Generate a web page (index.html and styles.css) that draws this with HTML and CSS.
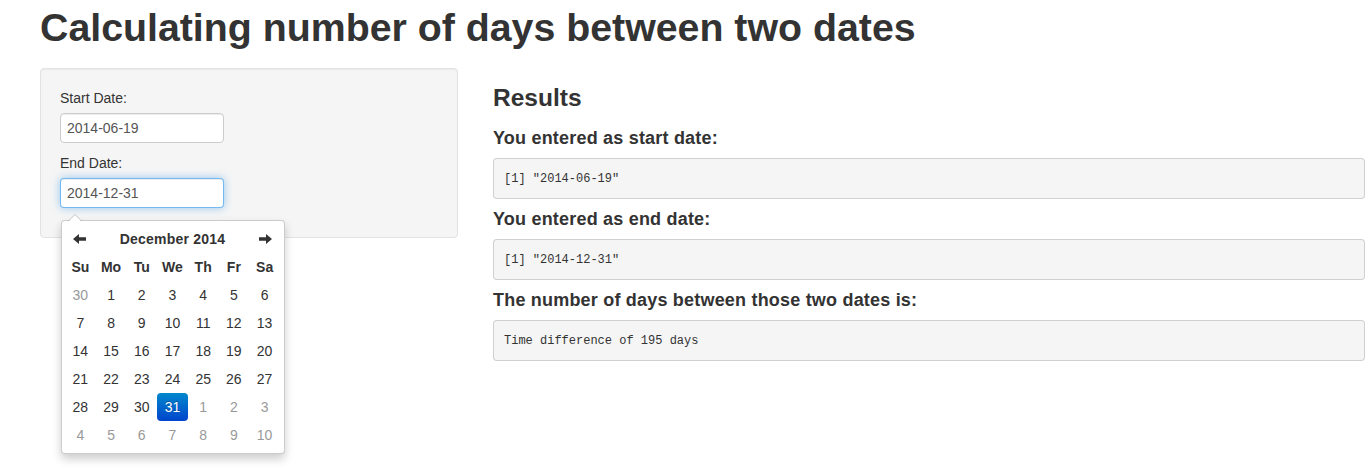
FILE: index.html
```html
<!DOCTYPE html>
<html>
<head>
<meta charset="utf-8">
<link rel="stylesheet" href="styles.css">
</head>
<body>
<div class="page">
  <h1 class="title">Calculating number of days between two dates</h1>
  <div class="layout">
    <div class="well">
      <label class="lbl">Start Date:</label>
      <input class="inp" type="text" value="2014-06-19">
      <label class="lbl">End Date:</label>
      <div class="picker-wrap">
        <input class="inp focus" type="text" value="2014-12-31">
        <div class="datepicker">
          <table class="cal">
            <thead>
              <tr class="head">
                <th class="nav"><svg width="14" height="10" viewBox="0 0 14 10"><path d="M0 5 L6 0 L6 3.3 L13 3.3 L13 6.7 L6 6.7 L6 10 Z" fill="#333"/></svg></th>
                <th colspan="5" class="month">December 2014</th>
                <th class="nav"><svg width="14" height="10" viewBox="0 0 14 10"><path d="M14 5 L8 0 L8 3.3 L1 3.3 L1 6.7 L8 6.7 L8 10 Z" fill="#333"/></svg></th>
              </tr>
              <tr class="dow">
                <th>Su</th><th>Mo</th><th>Tu</th><th>We</th><th>Th</th><th>Fr</th><th>Sa</th>
              </tr>
            </thead>
            <tbody>
              <tr><td class="old">30</td><td>1</td><td>2</td><td>3</td><td>4</td><td>5</td><td>6</td></tr>
              <tr><td>7</td><td>8</td><td>9</td><td>10</td><td>11</td><td>12</td><td>13</td></tr>
              <tr><td>14</td><td>15</td><td>16</td><td>17</td><td>18</td><td>19</td><td>20</td></tr>
              <tr><td>21</td><td>22</td><td>23</td><td>24</td><td>25</td><td>26</td><td>27</td></tr>
              <tr><td>28</td><td>29</td><td>30</td><td class="active">31</td><td class="old">1</td><td class="old">2</td><td class="old">3</td></tr>
              <tr><td class="old">4</td><td class="old">5</td><td class="old">6</td><td class="old">7</td><td class="old">8</td><td class="old">9</td><td class="old">10</td></tr>
            </tbody>
          </table>
        </div>
      </div>
    </div>
    <div class="main">
      <h3 class="h3">Results</h3>
      <h4 class="h4">You entered as start date:</h4>
      <pre class="out">[1] "2014-06-19"</pre>
      <h4 class="h4">You entered as end date:</h4>
      <pre class="out">[1] "2014-12-31"</pre>
      <h4 class="h4">The number of days between those two dates is:</h4>
      <pre class="out">Time difference of 195 days</pre>
    </div>
  </div>
</div>
</body>
</html>
```
FILE: styles.css
```css
html, body {
  margin: 0;
  padding: 0;
  background: #fff;
}
body {
  font-family: "Liberation Sans", Arial, sans-serif;
  font-size: 14px;
  line-height: 20px;
  color: #333;
}
.page {
  padding-left: 40px;
  min-height: 470px;
  box-sizing: border-box;
}
.title {
  margin: 7px 0 21px;
  font-size: 39.3px;
  line-height: 40px;
  font-weight: bold;
  color: #333;
  white-space: nowrap;
}
.layout {
  display: flex;
  align-items: flex-start;
  gap: 35px;
}
.well {
  width: 418px;
  flex: none;
  box-sizing: border-box;
  background: #f5f5f5;
  border: 1px solid #e3e3e3;
  border-radius: 4px;
  padding: 19px;
  box-shadow: inset 0 1px 1px rgba(0,0,0,0.05);
}
.lbl {
  display: block;
  margin-bottom: 5px;
  font-size: 14px;
  line-height: 20px;
  color: #333;
}
.inp {
  display: block;
  box-sizing: border-box;
  width: 164px;
  height: 30px;
  padding: 4px 6px;
  margin: 0 0 10px;
  font-family: "Liberation Sans", Arial, sans-serif;
  font-size: 14px;
  line-height: 20px;
  color: #555;
  background: #fff;
  border: 1px solid #ccc;
  border-radius: 4px;
  box-shadow: inset 0 1px 1px rgba(0,0,0,0.075);
  outline: none;
}
.inp.focus {
  border-color: rgba(82,168,236,0.8);
  box-shadow: inset 0 1px 1px rgba(0,0,0,0.075), 0 0 8px rgba(82,168,236,0.6);
}
.picker-wrap {
  position: relative;
}
.datepicker {
  position: absolute;
  top: 42px;
  left: 1px;
  z-index: 10;
  width: 224px;
  box-sizing: border-box;
  padding: 4px 4px 4px 3px;
  background: #fff;
  border: 1px solid rgba(0,0,0,0.2);
  border-radius: 4px;
  box-shadow: 0 5px 10px rgba(0,0,0,0.2);
}
.datepicker::before {
  content: "";
  position: absolute;
  top: -7px;
  left: 6px;
  border-left: 7px solid transparent;
  border-right: 7px solid transparent;
  border-bottom: 7px solid rgba(0,0,0,0.2);
}
.datepicker::after {
  content: "";
  position: absolute;
  top: -6px;
  left: 7px;
  border-left: 6px solid transparent;
  border-right: 6px solid transparent;
  border-bottom: 6px solid #fff;
}
.cal {
  width: 100%;
  border-collapse: collapse;
  table-layout: fixed;
}
.cal th, .cal td {
  height: 28px;
  padding: 0;
  text-align: center;
  font-size: 14px;
  line-height: 20px;
}
.cal th {
  font-weight: bold;
  color: #333;
}
.cal .month {
  letter-spacing: 0.2px;
}
.cal .nav svg {
  display: block;
  margin: 0 auto;
}
.cal td {
  color: #333;
}
.cal td.old {
  color: #999;
}
.cal td.active {
  color: #fff;
  text-shadow: 0 -1px 0 rgba(0,0,0,0.25);
  background-image: linear-gradient(to bottom, #0088cc, #0044cc);
  border-radius: 4px;
}
.main {
  flex: 1;
  min-width: 0;
}
.h3 {
  margin: 10px 0;
  font-size: 24.5px;
  line-height: 40px;
  font-weight: bold;
}
.h4 {
  margin: 10px 0;
  font-size: 18px;
  letter-spacing: 0.2px;
  line-height: 20px;
  font-weight: bold;
}
.out {
  margin: 0 0 10px;
  padding: 9.5px 10px;
  font-family: "Liberation Mono", "Courier New", monospace;
  font-size: 12px;
  line-height: 20px;
  color: #333;
  background: #f5f5f5;
  border: 1px solid rgba(0,0,0,0.15);
  border-radius: 4px;
  white-space: pre;
}
```
